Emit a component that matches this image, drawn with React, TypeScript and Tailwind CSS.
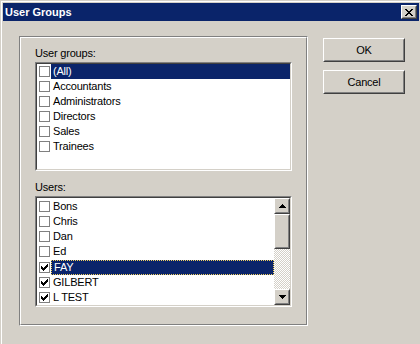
import React from "react";

type Item = { name: string; checked?: boolean; selected?: boolean; focused?: boolean };

const groups: Item[] = [
  { name: "(All)", selected: true },
  { name: "Accountants" },
  { name: "Administrators" },
  { name: "Directors" },
  { name: "Sales" },
  { name: "Trainees" },
];

const users: Item[] = [
  { name: "Bons" },
  { name: "Chris" },
  { name: "Dan" },
  { name: "Ed" },
  { name: "FAY", checked: true, selected: true, focused: true },
  { name: "GILBERT", checked: true },
  { name: "L TEST", checked: true },
];

const CheckBox = ({ checked }: { checked?: boolean }) => (
  <div className="w-[11px] h-[11px] shrink-0 border border-[#808080] bg-white flex items-center justify-center">
    {checked && (
      <svg width="7" height="7" viewBox="0 0 7 7" shapeRendering="crispEdges">
        <path
          fill="#000"
          d="M6 0h1v1h-1zM5 1h2v1h-2zM0 2h1v1h-1zM4 2h3v1h-3zM0 3h2v1h-2zM3 3h3v1h-3zM0 4h5v1h-5zM1 5h3v1h-3zM2 6h1v1h-1z"
        />
      </svg>
    )}
  </div>
);

// classic raised 3d edge
const Raised = ({ className, children }: { className?: string; children?: React.ReactNode }) => (
  <div className={"border border-t-white border-l-white border-r-[#404040] border-b-[#404040] " + (className ?? "")}>
    <div className="w-full h-full border border-t-[#d4d0c8] border-l-[#d4d0c8] border-r-[#808080] border-b-[#808080] bg-[#d4d0c8] flex items-center justify-center">
      {children}
    </div>
  </div>
);

const Sunken = ({ className, children }: { className?: string; children?: React.ReactNode }) => (
  <div className={"border border-t-[#808080] border-l-[#808080] border-r-white border-b-white " + (className ?? "")}>
    <div className="w-full h-full border border-t-[#404040] border-l-[#404040] border-r-[#d4d0c8] border-b-[#d4d0c8] bg-white flex">
      {children}
    </div>
  </div>
);

const Row = ({ item, tall }: { item: Item; tall?: boolean }) => (
  <div className={(tall ? "h-[15.4px]" : "h-[15px]") + " flex items-center pl-[2px]"}>
    <CheckBox checked={item.checked} />
    <div
      className={
        "ml-[1px] flex-1 h-[15px] flex items-center pl-[2px] " +
        (item.selected ? "bg-[#0a246a] text-white " : "") +
        (item.focused ? "border border-dotted border-[#f0d060] pl-[1px]" : "")
      }
    >
      {item.name}
    </div>
  </div>
);

const Arrow = ({ down }: { down?: boolean }) => (
  <svg width="7" height="4" viewBox="0 0 7 4" shapeRendering="crispEdges" className={down ? "rotate-180" : ""}>
    <path fill="#000" d="M3 0h1v1h-1zM2 1h3v1h-3zM1 2h5v1h-5zM0 3h7v1h-7z" />
  </svg>
);

export default function App() {
  return (
    <div className="w-[420px] h-[344px] bg-[#d4d0c8] pl-px pt-px overflow-hidden font-['Liberation_Sans',Arial,sans-serif] text-[11px] leading-[13px] text-black tracking-[-0.2px]">
      <div className="h-full border-l border-t border-white pl-px pt-px flex flex-col">
        {/* title bar */}
        <div className="h-[18px] mr-[1px] bg-[#0a246a] flex items-center justify-between pl-[2px] pr-[2px]">
          <span className="text-white font-bold tracking-normal">User Groups</span>
          <Raised className="w-[16px] h-[14px]">
            <svg width="8" height="7" viewBox="0 0 8 7" shapeRendering="crispEdges">
              <path
                fill="#000"
                d="M0 0h2v1h-2zM6 0h2v1h-2zM1 1h2v1h-2zM5 1h2v1h-2zM2 2h4v1h-4zM3 3h2v1h-2zM2 4h4v1h-4zM1 5h2v1h-2zM5 5h2v1h-2zM0 6h2v1h-2zM6 6h2v1h-2z"
              />
            </svg>
          </Raised>
        </div>

        <div className="flex pl-[16px] pt-[15px] gap-[15px]">
          {/* group box */}
          <div className="w-[289px] h-[290px] border border-t-[#808080] border-l-[#808080] border-r-white border-b-white">
            <div className="w-full h-full border border-t-white border-l-white border-r-[#808080] border-b-[#808080] pl-[14px] pt-[9px] flex flex-col">
              <div>User groups:</div>
              <Sunken className="mt-[2px] w-[257px] h-[109px]">
                <div className="flex-1 flex flex-col">
                  {groups.map((g) => (
                    <Row key={g.name} item={g} />
                  ))}
                </div>
              </Sunken>

              <div className="mt-[10px]">Users:</div>
              <Sunken className="mt-[2px] w-[257px] h-[111px]">
                <div className="flex-1 flex flex-col pt-[1px]">
                  {users.map((u) => (
                    <Row key={u.name} item={u} tall />
                  ))}
                </div>
                <div className="w-[16px] flex flex-col">
                  <Raised className="h-[16px]">
                    <Arrow />
                  </Raised>
                  <Raised className="h-[35px]" />
                  <div className="flex-1 bg-[image:repeating-conic-gradient(#fff_0%_25%,#d4d0c8_0%_50%)] bg-[length:2px_2px]" />
                  <Raised className="h-[16px]">
                    <Arrow down />
                  </Raised>
                </div>
              </Sunken>
            </div>
          </div>

          {/* buttons */}
          <div className="mt-[2px] flex flex-col gap-[8px]">
            <Raised className="w-[82px] h-[24px]">OK</Raised>
            <Raised className="w-[82px] h-[24px]">Cancel</Raised>
          </div>
        </div>
      </div>
    </div>
  );
}
